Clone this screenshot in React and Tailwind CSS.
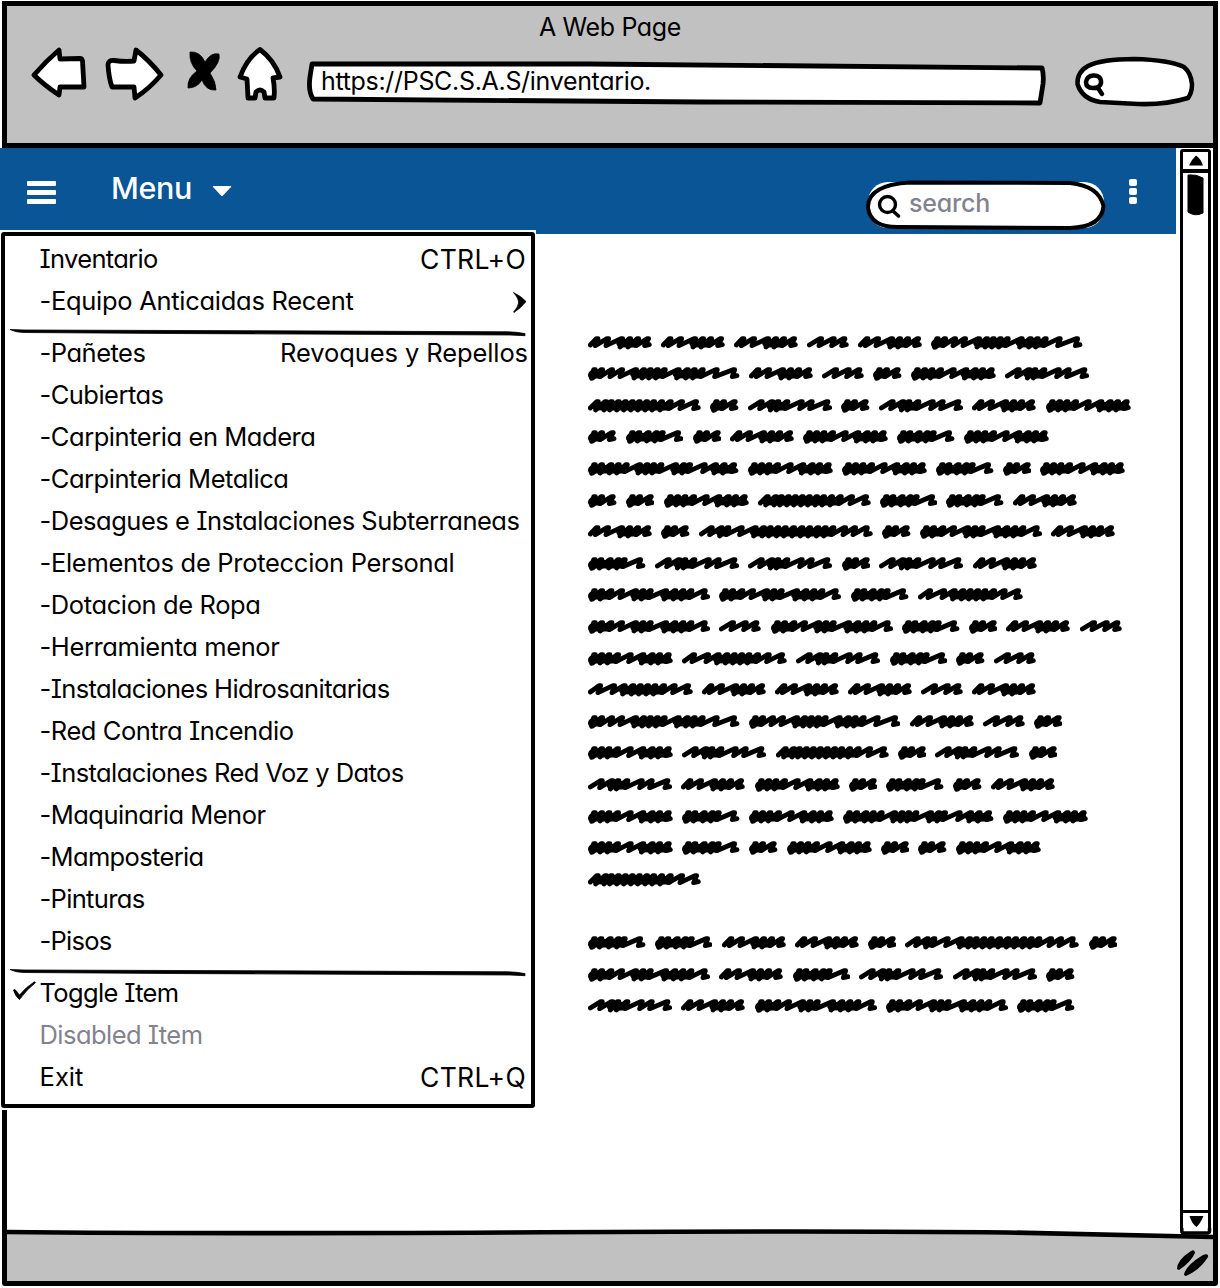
import React, { useLayoutEffect, useRef, useState } from "react";

// Text whose tracking is adjusted so that it fills a given width.
function Fit({ w, className = "", children }) {
  const ref = useRef(null);
  const [tracking, setTracking] = useState(0);
  useLayoutEffect(() => {
    const natural = ref.current.getBoundingClientRect().width;
    setTracking((w - natural) / children.length);
  }, []);
  return (
    <span ref={ref} className={"inline-block whitespace-pre " + className} style={{ letterSpacing: tracking + "px" }}>
      {children}
    </span>
  );
}

// Scribbled words: width and the x positions of the pen's peaks, in thirds of a pixel.
const WORDS = {
  A: [192, [30, 62, 104, 128, 152, 182]],
  B: [126, [44, 82, 114]],
  C: [455, [22, 44, 74, 104, 146, 170, 190, 211, 232, 274, 301, 322, 346, 388, 440]],
  D: [86, [22, 44, 76]],
  E: [255, [22, 44, 66, 92, 130, 168, 196, 218, 244]],
  F: [253, [43, 75, 93, 120, 163, 193, 240]],
  G: [339, [31, 56, 73, 94, 115, 136, 157, 179, 200, 224, 250, 284, 326]],
  H: [173, [22, 42, 70, 94, 112, 158]],
  I: [452, [22, 44, 72, 94, 118, 158, 180, 200, 222, 266, 290, 308, 352, 386, 412, 440]],
  J: [522, [40, 70, 90, 130, 172, 197, 217, 240, 262, 287, 312, 335, 360, 382, 405, 440, 470, 505]],
  K: [367, [22, 44, 72, 104, 146, 168, 190, 236, 264, 288, 312, 352]],
  L: [315, [38, 80, 112, 138, 160, 182, 204, 230, 262, 302]],
};

function Word({ kind }) {
  const [w, peaks] = WORDS[kind];
  const heavy = peaks[0] < 25;
  let d = heavy ? "M8 26L11 34" : "M7 27";
  let fill = heavy ? `M13 23L${peaks[1] - 12} 21` : "";
  peaks.forEach((p, i) => {
    const next = peaks[i + 1];
    d += `L${p - 5} 8L${p} 8`;
    if (next) {
      const dense = next - p < 29;
      d += `L${p - 8} ${dense ? 33 : 29}`;
      if (dense) fill += `M${p - 7} 21L${next - 7} 22`;
    }
  });
  d += `L${w - 22} 29L${w - 8} 26`;
  return (
    <svg className="h-[14px] shrink-0" style={{ width: w / 3 }} viewBox={`0 0 ${w} 42`}>
      <g fill="none" stroke="#000" strokeLinecap="round" strokeLinejoin="round">
        <path d={d} strokeWidth="14.5" />
        <path d={fill} strokeWidth="25" />
      </g>
    </svg>
  );
}

const LINES = [
  "AAABAC", "CABDEF", "GDFDFAE", "DHDAEHE", "IEEHDE", "DDEGHHA", "ADJDKA", "HFFDFA", "KKHL", "KBKHDAB", "ELFHDB",
  "LAAABA", "CCABD", "EFGDFD", "FAEDHDA", "EHEIE", "EHDEDDE", "G", "", "HHAADJD", "KAHFFD", "FAKKH",
];

const ITEMS = [
  ["-Cubiertas", 124], ["-Carpinteria en Madera", 276], ["-Carpinteria Metalica", 249],
  ["-Desagues e Instalaciones Subterraneas", 480], ["-Elementos de Proteccion Personal", 415],
  ["-Dotacion de Ropa", 221], ["-Herramienta menor", 240], ["-Instalaciones Hidrosanitarias", 350],
  ["-Red Contra Incendio", 254], ["-Instalaciones Red Voz y Datos", 364], ["-Maquinaria Menor", 226],
  ["-Mamposteria", 164], ["-Pinturas", 105], ["-Pisos", 72],
];

function Item({ text, w, right, rw, rightClass = "", pad = "pr-[5px]", className = "", children }) {
  return (
    <div className={"flex h-[42px] items-center justify-between pl-[34.5px] " + pad + " " + className}>
      <Fit w={w}>{text}</Fit>
      {right && <Fit w={rw} className={rightClass}>{right}</Fit>}
      {children}
    </div>
  );
}

function Divider() {
  return (
    <svg className="ml-[5px] block h-[10px] w-[516px] overflow-visible" viewBox="0 0 516 10">
      <path d="M0 7.500Q6 10.500 14 10.500L160 11.500L500 13L515 13.700V11.600Q507 10 498 9.800L260 8.800L14 8Z" stroke="#000" strokeWidth=".8" />
    </svg>
  );
}

function Menu() {
  return (
    <div className="absolute left-0 top-[230px] h-[880px] w-[536px] bg-white pl-[1px] pt-[2px]">
      <div className="h-[876px] w-[534px] rounded-[3px] border-[4.5px] border-black pt-[2px] text-[25.5px] leading-none">
        <Item text="Inventario" w={118} right="CTRL+O" rw={106} rightClass="text-[26.5px]" />
        <Item text="-Equipo Anticaidas Recent" w={314}>
          <svg className="mt-[3px] h-[21px] w-[13px]" viewBox="0 0 13 21">
            <path d="M.5.500Q8 4 13 9.500Q8 16 1 20.500L.5 20Q5 15 5.500 11Q6 7 .5.500Z" stroke="#000" strokeWidth=".7" />
          </svg>
        </Item>
        <Divider />
        <Item text="-Pañetes" w={106} right="Revoques y Repellos" rw={248} pad="pr-[3px]" />
        {ITEMS.map(([text, w]) => <Item key={text} text={text} w={w} />)}
        <Divider />
        <div className="relative">
          <svg className="absolute left-[8px] top-[9px] h-[20px] w-[24px]" viewBox="0 0 24 20">
            <path d="M.5 9Q1.500 8 3 9.500L6.500 14Q13 6 21.500.7L22.500 1.700Q14 8 6.500 18.500Q2 15 .5 9Z" stroke="#000" strokeWidth=".8" />
          </svg>
          <Item text="Toggle Item" w={139} />
        </div>
        <Item text="Disabled Item" w={163} className="text-[#83838f]" />
        <Item text="Exit" w={44} right="CTRL+Q" rw={106} rightClass="text-[26.5px]" />
      </div>
    </div>
  );
}

function Chrome() {
  return (
    <header className="h-[142px] border-b-[5px] border-black bg-[#c1c1c1]">
      <div className="flex h-[41px] items-center justify-center pt-px text-[25px] leading-none">
        <Fit w={142}>A Web Page</Fit>
      </div>
      <div className="-mt-px flex h-[62px] items-start pl-[24px]">
        <svg className="h-[56px] w-[56px]" viewBox="31 46 56 56" fill="#fff" stroke="#000" strokeWidth="4.800" strokeLinejoin="round">
          <path d="M34 75Q46 61 59 50L60 59L80 58.500Q82 58.500 82.500 61L84 87L60 87L59 95Q44 85 34 75Z" />
        </svg>
        <svg className="ml-[18px] h-[56px] w-[59px]" viewBox="105 46 59 56" fill="#fff" stroke="#000" strokeWidth="4.800" strokeLinejoin="round">
          <path d="M108 65Q108 60 114 60.500Q126 62 134 61L136 50Q149 60 161 75Q149 89 135 98L134 87L112 87Q109 79 108 65Z" />
        </svg>
        <svg className="ml-[23px] h-[56px] w-[34px]" viewBox="187 46 34 56">
          <path d="M190 52Q200 51 205 62Q211 52 219 54Q221 62 210 73Q216 82 216 90Q206 91 202 80Q197 88 188 88Q187 78 197 71Q189 63 190 52Z" stroke="#000" strokeWidth=".8" />
        </svg>
        <svg className="ml-[16px] h-[56px] w-[47px]" viewBox="237 46 47 56" fill="#fff" stroke="#000" strokeWidth="4.800" strokeLinejoin="round">
          <path d="M260 49.500Q274 60 280 77L273 78Q275 88 274 98L265 98L264 92Q260 88 256 92L255 98L248 98L247 79L240 77Q247 58 260 49.500Z" />
        </svg>
        <div className="relative ml-[22px] mt-[15px] h-[46px] w-[742px]">
          <svg className="absolute inset-0 h-full w-full" viewBox="306 60 742 46" fill="#fff" stroke="#000" strokeWidth="4.800" strokeLinejoin="round">
            <path d="M312 63L590 63Q820 65 1042 67Q1044 74 1043 83L1040 102L700 101L313 98Q308 90 310 76Z" />
          </svg>
          <div className="relative pl-[15px] pt-[8px] text-[25px] leading-none">
            <Fit w={330}>https://PSC.S.A.S/inventario.</Fit>
          </div>
        </div>
        <svg className="ml-[24px] mt-[8px] h-[54px] w-[126px]" viewBox="1072 54 126 54" fill="none" stroke="#000" strokeWidth="4.500" strokeLinecap="round" strokeLinejoin="round">
          <path fill="#fff" d="M1100 102Q1082 99 1077.500 84Q1077 72 1088 66Q1102 59 1134 59Q1170 60 1184 67Q1191 73 1192 84Q1192 93 1188 98Q1165 105 1138 104Z" />
          <path d="M1093 75.500Q1101.500 75 1101 83Q1100 88 1093 88Q1086 88 1086 82Q1087 76 1093 75.500ZM1098 88L1102 94" />
        </svg>
      </div>
    </header>
  );
}

function AppBar() {
  return (
    <div className="relative -ml-[7px] flex h-[86px] w-[1176px] bg-[#095595]">
      <div className="ml-[27px] mt-[33px] flex h-[23px] w-[29px] flex-col justify-between">
        <i className="h-[5px] rounded-[1px] bg-white" />
        <i className="h-[5px] rounded-[1px] bg-white" />
        <i className="h-[5px] rounded-[1px] bg-white" />
      </div>
      <div className="ml-[55px] mt-[25px] text-[30.5px] font-medium leading-none text-white">
        <Fit w={81}>Menu</Fit>
      </div>
      <svg className="ml-[20px] mt-[37px] h-[12px] w-[20px]" viewBox="0 0 20 12" fill="#fff">
        <path d="M1 1H19Q20 2 18 3L11 10.500Q10 11.500 9 10.500L2 3Q0 2 1 1Z" />
      </svg>
      <div className="relative ml-[633px] mt-[31px] h-[51px] w-[241px]">
        <svg className="absolute inset-0 h-full w-full" viewBox="865 179 241 51">
          <rect x="868" y="182" width="236" height="46" rx="20" fill="#fff" />
          <path d="M900 227Q871 228 868 208Q867 185 910 182.500L1070 183Q1099 186 1103.500 206Q1102 227 1070 228Z" fill="#fff" stroke="#000" strokeWidth="4" />
          <circle cx="887.5" cy="204.500" r="8" fill="none" stroke="#000" strokeWidth="3.400" />
          <path d="M893 211L898.500 216" stroke="#000" strokeWidth="3.500" strokeLinecap="round" />
        </svg>
        <div className="relative pl-[44px] pt-[12px] text-[25px] font-medium leading-none text-[#83838f]">
          <Fit w={81}>search</Fit>
        </div>
      </div>
      <div className="ml-[23px] mt-[31px] flex h-[25px] w-[8px] flex-col justify-between">
        <i className="h-[7px] rounded-[2px] bg-white" />
        <i className="h-[7px] rounded-[2px] bg-white" />
        <i className="h-[7px] rounded-[2px] bg-white" />
      </div>
    </div>
  );
}

function Scrollbar() {
  return (
    <div className="ml-[4px] mt-[1px] flex h-[1084px] w-[31px] shrink-0 flex-col rounded-[3px] border-[3.5px] border-black bg-white">
      <div className="flex h-[21px] items-center justify-center border-b-[4px] border-black">
        <svg className="ml-[2px] h-[11px] w-[15px]" viewBox="0 0 15 11"><path d="M0 10.500Q3 4 7 .5Q12 4 14 10.500Z" /></svg>
      </div>
      <svg className="ml-[4px] mt-px h-[42px] w-[17px]" viewBox="0 0 17 42">
        <path d="M1 1Q9 0 16 4V39Q8 43 1 38Z" stroke="#000" strokeLinejoin="round" />
      </svg>
      <div className="mt-auto flex h-[20px] items-center justify-center border-t-[3px] border-black">
        <svg className="ml-[2px] h-[11px] w-[15px]" viewBox="0 0 15 11"><path d="M.5 0H14.500Q11 8 7.500 11Q3 8 .5 0Z" /></svg>
      </div>
    </div>
  );
}

export default function App() {
  return (
    <div className="relative h-[1288px] w-[1220px] overflow-hidden bg-white pl-[2px] pt-px font-['Inter','Liberation_Sans',sans-serif] text-black [font-feature-settings:'cv11','cv08']">
      <div className="flex h-[1285px] w-[1216px] flex-col rounded-b-[3px] border-[5px] border-black">
        <Chrome />
        <div className="flex h-[1082px]">
          <main className="w-[1169px] shrink-0">
            <AppBar />
            <div className="ml-[581px] mt-[101.500px]">
              {LINES.map((line, i) => (
                <div key={i} className="flex h-[31.620px] gap-[9.100px]">
                  {line.split("").map((kind, j) => <Word key={j} kind={kind} />)}
                </div>
              ))}
            </div>
          </main>
          <Scrollbar />
        </div>
        <footer className="relative flex flex-1 justify-end bg-[#c1c1c1]">
          <svg className="absolute left-0 top-[-2px] h-[14px] w-[1206px]" viewBox="0 0 1206 14">
            <path d="M0 2H1206V8L1000 3L0 3Z" fill="#fff" />
            <path d="M0 4Q180 6 500 4.500Q820 2.500 1000 4.500Q1120 7 1206 9" fill="none" stroke="#000" strokeWidth="4.700" />
            <path d="M1174.800 0V3Q1174.800 5 1177 5H1200Q1202.500 5 1202.500 3V0" fill="none" stroke="#000" strokeWidth="3.500" />
          </svg>
          <svg className="mr-[4px] mt-[18px] h-[30px] w-[34px]" viewBox="1175 1248 34 30">
            <path d="M1177 1269Q1177 1260 1191 1251Q1195 1249 1195 1253Q1191 1262 1179 1270ZM1184 1275Q1185 1266 1203 1255Q1209 1253 1208 1257Q1200 1270 1186 1276Z" />
          </svg>
        </footer>
      </div>
      <Menu />
    </div>
  );
}
